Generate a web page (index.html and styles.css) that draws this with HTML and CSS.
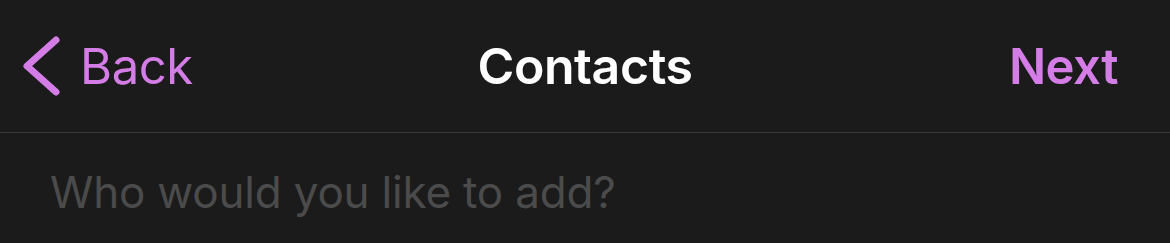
FILE: index.html
```html
<!DOCTYPE html>
<html lang="en">
<head>
  <meta charset="UTF-8">
  <title>Contacts</title>
  <link rel="stylesheet" href="styles.css">
</head>
<body>
  <header class="nav-bar">
    <a class="nav-back" href="#">
      <svg class="chevron" width="40" height="64" viewBox="0 0 40 64">
        <path d="M35 6 L6 32 L35 58" fill="none" stroke="currentColor" stroke-width="7" stroke-linecap="round" stroke-linejoin="round"/>
      </svg>
      <span>Back</span>
    </a>
    <h1 class="nav-title">Contacts</h1>
    <a class="nav-next" href="#">Next</a>
  </header>
  <div class="search-row">
    <input class="search-input" type="text" placeholder="Who would you like to add?">
  </div>
</body>
</html>
```

FILE: styles.css
```css
html, body {
  margin: 0;
  padding: 0;
  background: #1b1b1b;
  height: 100%;
}

body {
  font-family: Inter, "Noto Sans", sans-serif;
  overflow: hidden;
}

.nav-bar {
  height: 132px;
  display: grid;
  grid-template-columns: 1fr auto 1fr;
  align-items: center;
  border-bottom: 1px solid #3a3a3a;
  box-sizing: content-box;
}

.nav-back {
  justify-self: start;
  display: flex;
  align-items: center;
  gap: 19px;
  padding-left: 21px;
  color: #d47de7;
  text-decoration: none;
  font-size: 49px;
  letter-spacing: -0.4px;
}

.chevron {
  display: block;
}

.nav-title {
  margin: 0;
  color: #ffffff;
  font-size: 50px;
  font-weight: 600;
  letter-spacing: -0.4px;
}

.nav-next {
  justify-self: end;
  padding-right: 52px;
  color: #d47de7;
  text-decoration: none;
  font-size: 49px;
  font-weight: 600;
  letter-spacing: -0.5px;
}

.search-row {
  padding: 32px 0 0 50px;
}

.search-input {
  width: 1000px;
  border: none;
  outline: none;
  background: transparent;
  padding: 0;
  font-family: Inter, "Noto Sans", sans-serif;
  font-size: 44px;
  color: #ffffff;
  letter-spacing: -0.2px;
}

.search-input::placeholder {
  color: #4b4b4b;
}
```
